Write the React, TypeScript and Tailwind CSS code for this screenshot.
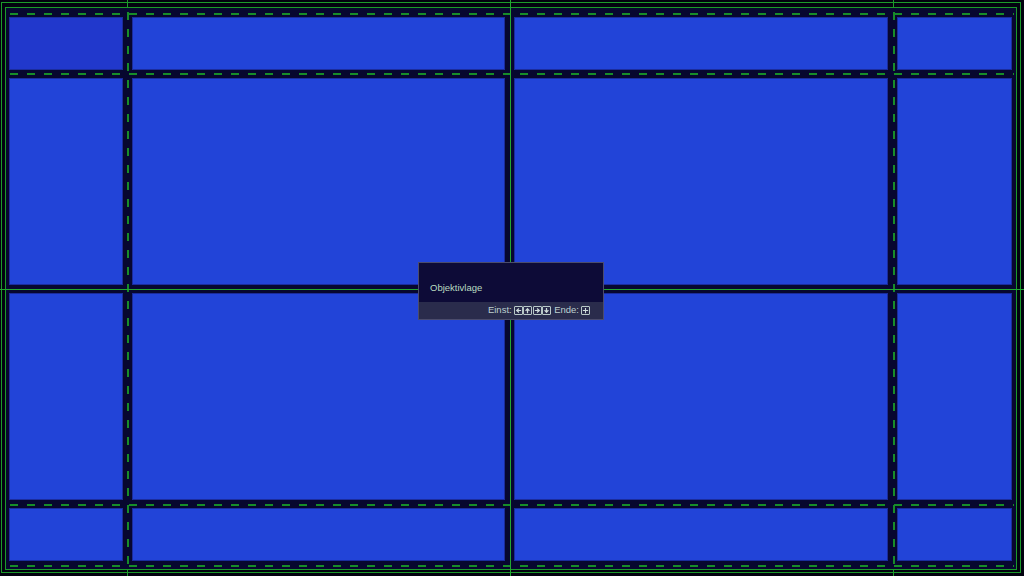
const cols = ["w-[114px]", "w-[373px]", "w-[374px]", "w-[115px]"];
const rows = ["h-[53px]", "h-[207px]", "h-[207px]", "h-[53px]"];

function Panel({ dark }: { dark?: boolean }) {
    return (
        <div
            className={`w-full h-full border border-[#1b2c9c] ${dark ? "bg-[#2138cc]" : "bg-[#2244d8]"}`}
        />
    );
}

function KeyBox({ children }: { children: React.ReactNode }) {
    return (
        <span className="inline-flex items-center justify-center w-[9px] h-[9px] border border-[#b8c8c8] rounded-[1px]">
            {children}
        </span>
    );
}

function Arrow({ dir }: { dir: "l" | "u" | "r" | "d" }) {
    const rot = { l: "rotate-180", u: "-rotate-90", r: "", d: "rotate-90" }[dir];
    return (
        <svg viewBox="0 0 8 8" className={`w-[7px] h-[7px] ${rot}`}>
            <path d="M1 4h4M3.5 1.8L6 4 3.5 6.2" stroke="#d0dcdc" strokeWidth="1.4" fill="none" />
        </svg>
    );
}

function Dialog() {
    return (
        <div className="absolute left-[418px] top-[262px] w-[186px] h-[58px] z-20 flex flex-col border border-[#4b4c6c] bg-[#0d0b37] font-['Liberation_Sans',sans-serif]">
            <div className="flex-1 flex items-end px-[11px] pb-[7px] text-[9.5px] text-[#b9dcc0]">Objektivlage</div>
            <div className="h-[17px] bg-[#2a2c4c] flex items-center justify-end gap-[2px] pr-[13px] text-[9.5px] text-[#bdd0d0]">
                <span>Einst:</span>
                <span className="flex gap-[0.5px]">
                    <KeyBox><Arrow dir="l" /></KeyBox>
                    <KeyBox><Arrow dir="u" /></KeyBox>
                    <KeyBox><Arrow dir="r" /></KeyBox>
                    <KeyBox><Arrow dir="d" /></KeyBox>
                </span>
                <span className="ml-[1px]">Ende:</span>
                <KeyBox>
                    <svg viewBox="0 0 8 8" className="w-[7px] h-[7px]">
                        <path d="M4 1v6M1 4h6" stroke="#d0dcdc" strokeWidth="1.2" />
                    </svg>
                </KeyBox>
            </div>
        </div>
    );
}

const dashH = "bg-[repeating-linear-gradient(90deg,#178c29_0_8px,transparent_8px_17px)]";
const dashV = "bg-[repeating-linear-gradient(180deg,#178c29_0_8px,transparent_8px_17px)]";

export default function App() {
    return (
        <div className="relative w-[1024px] h-[576px] overflow-hidden bg-[#02020f] pl-[1px] pt-[2px] pr-[3px] pb-[3px]">
            <div className="w-full h-full border border-[#1b9a2a] p-[3px] pt-[4px] pb-[2px]">
                <div className="w-full h-full border border-[#1b9a2a] bg-[#07072f] pl-[3px] pt-[9px]">
                    <div className="grid grid-cols-[114px_373px_374px_115px] grid-rows-[53px_207px_207px_53px] gap-x-[9px] gap-y-[8px]">
                        {rows.map((r, i) =>
                            cols.map((c, j) => (
                                <div key={`${i}-${j}`} className={`${r} ${c}`}>
                                    <Panel dark={i === 0 && j === 0} />
                                </div>
                            ))
                        )}
                    </div>
                </div>
            </div>

            {/* dashed guides in the gaps */}
            <div className={`absolute left-[10px] top-[13px] w-[1004px] h-[2px] ${dashH}`} />
            <div className={`absolute left-[10px] top-[73px] w-[1004px] h-[2px] ${dashH}`} />
            <div className={`absolute left-[10px] top-[504px] w-[1004px] h-[2px] ${dashH}`} />
            <div className={`absolute left-[10px] top-[565px] w-[1004px] h-[2px] ${dashH}`} />
            <div className={`absolute left-[127px] top-[12px] w-[2px] h-[556px] ${dashV}`} />
            <div className={`absolute left-[893px] top-[12px] w-[2px] h-[556px] ${dashV}`} />

            {/* solid ticks outside the frame */}
            <div className="absolute left-[127px] top-0 w-[1px] h-[8px] bg-[#1b9a2a]" />
            <div className="absolute left-[127px] top-[570px] w-[1px] h-[6px] bg-[#1b9a2a]" />
            <div className="absolute left-[893px] top-0 w-[1px] h-[8px] bg-[#1b9a2a]" />
            <div className="absolute left-[893px] top-[570px] w-[1px] h-[6px] bg-[#1b9a2a]" />

            {/* center crosshair */}
            <div className="absolute left-0 top-[289px] w-[1024px] h-[1px] bg-[#22a831]" />
            <div className="absolute left-[510px] top-0 w-[1px] h-[576px] bg-[#22a831]" />

            <Dialog />
        </div>
    );
}
